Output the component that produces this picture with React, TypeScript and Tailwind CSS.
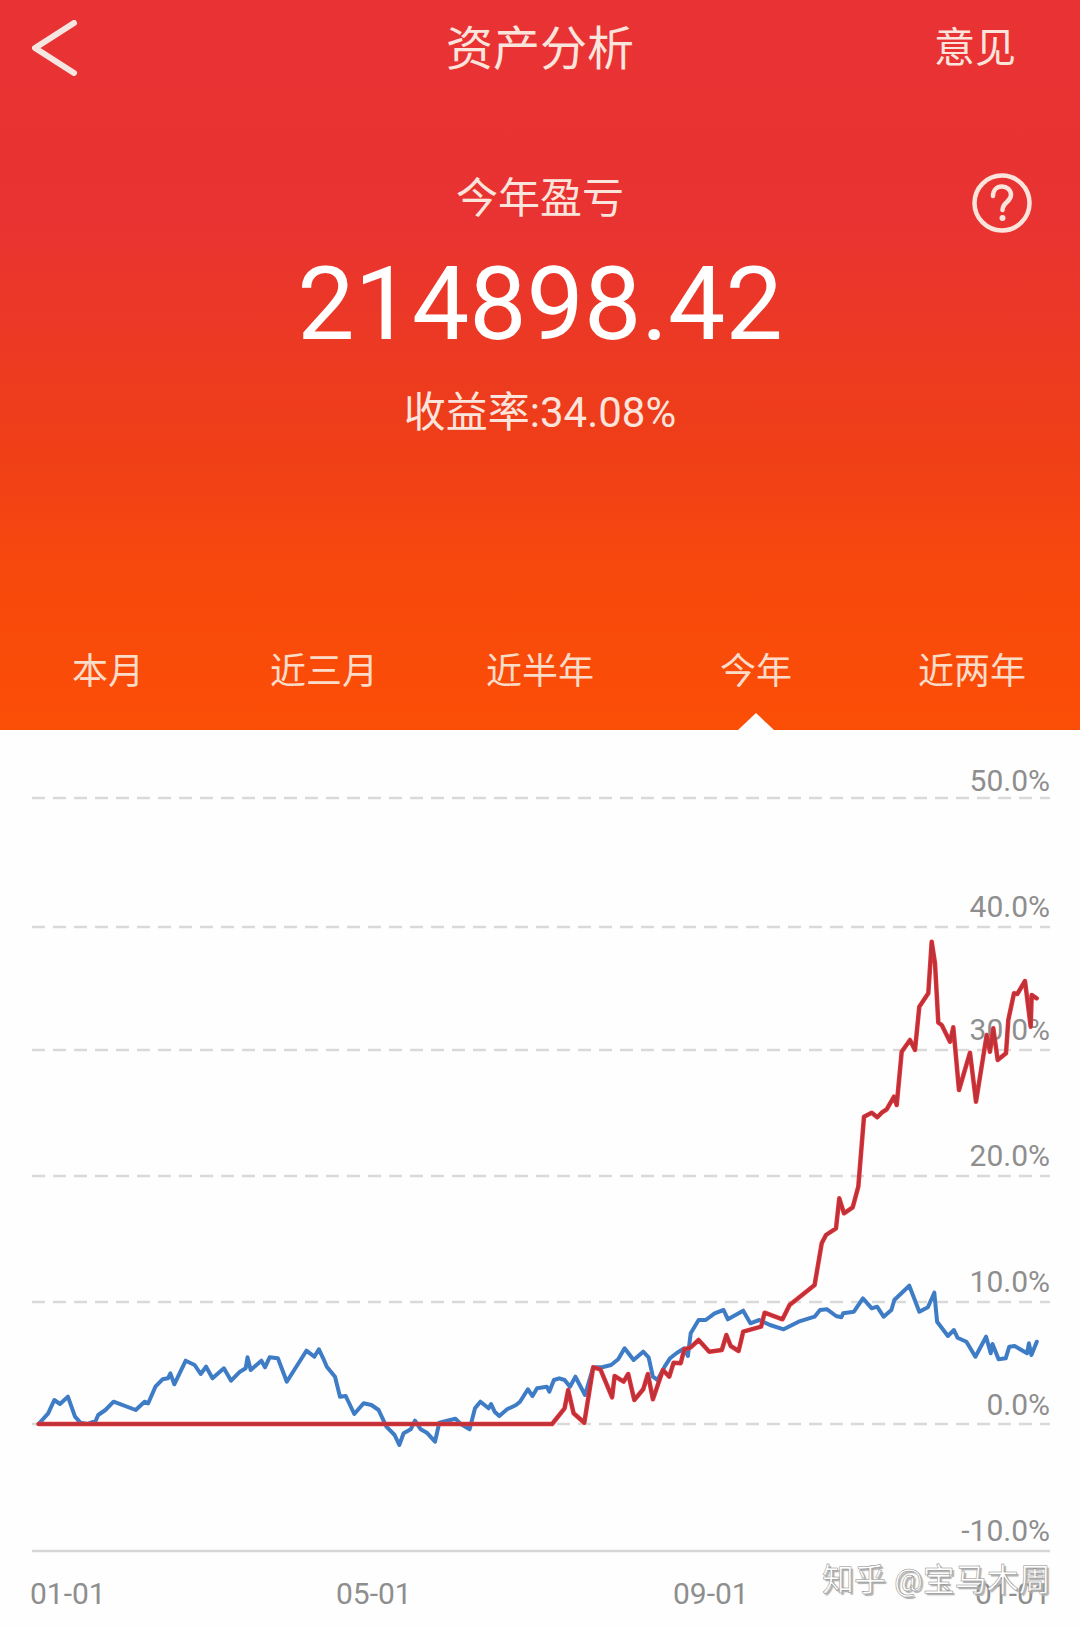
import { Fragment } from 'react';

const tabs = ['本月', '近三月', '近半年', '今年', '近两年'];

const grid = [
  { y: 798, label: '50.0%', ty: 791 },
  { y: 927, label: '40.0%', ty: 917 },
  { y: 1050, label: '30.0%', ty: 1040 },
  { y: 1176, label: '20.0%', ty: 1166 },
  { y: 1302, label: '10.0%', ty: 1292 },
  { y: 1424, label: '0.0%', ty: 1415 },
];

const xLabels = [
  { x: 30, label: '01-01' },
  { x: 336, label: '05-01' },
  { x: 673, label: '09-01' },
  { x: 975, label: '01-01' },
];

// traced off the reference crops, each run in its own crop's coordinates
const left = (pts: number[]) => conv(pts, 2.8, 0, 1270);
const right = (pts: number[]) => conv(pts, 2.8, 520, 1270);
const top = (pts: number[]) => conv(pts, 3, 720, 900);

function conv(pts: number[], scaleX: number, ox: number, oy: number) {
  const out: string[] = [];
  for (let i = 0; i < pts.length; i += 2) {
    out.push(`${(pts[i] / scaleX + ox).toFixed(1)},${(pts[i + 1] / 3 + oy).toFixed(1)}`);
  }
  return out.join(' ');
}

const bluePoints = [
  left([
    108, 462, 135, 430, 152, 390, 168, 402, 190, 380, 210, 440, 225, 458, 245, 462, 268, 452, 275, 435, 295, 420,
    318, 395, 380, 420, 405, 395, 415, 400, 435, 350, 455, 328, 470, 325, 477, 310, 488, 343, 520, 272, 545, 285,
    562, 312, 577, 290, 595, 325, 627, 295, 647, 332, 672, 305, 688, 295, 693, 262, 702, 300, 732, 272, 742, 292,
    755, 262, 778, 265, 803, 335, 858, 242, 880, 260, 893, 238, 905, 265, 915, 290, 938, 320, 952, 380, 968, 378,
    992, 432, 1018, 400, 1040, 405, 1060, 420, 1082, 470, 1105, 495, 1118, 525, 1130, 490, 1150, 478, 1162, 452,
    1178, 478, 1195, 488, 1218, 515, 1230, 458, 1275, 446, 1290, 462, 1315, 478, 1330, 415, 1345, 395, 1368, 415,
    1375, 402, 1385, 425, 1398, 438, 1420, 418, 1435, 410, 1445, 405, 1456, 395,
  ]),
  right([
    22, 358, 35, 378, 48, 355, 75, 350, 82, 365, 95, 330, 110, 325, 125, 330, 140, 350, 155, 320, 182, 375, 205, 292,
    230, 292, 255, 285, 275, 268, 293, 235, 318, 270, 345, 245, 360, 262, 372, 320, 385, 330, 405, 290, 420, 265,
    440, 248, 460, 235, 470, 258, 478, 190, 500, 150, 520, 150, 545, 130, 570, 120, 582, 148, 625, 122, 645, 160,
    670, 150, 700, 165, 738, 178, 780, 155, 825, 140, 840, 120, 860, 118, 885, 138, 900, 142, 905, 130, 935, 125,
    960, 85, 985, 115, 1000, 110, 1018, 140, 1040, 120, 1048, 90, 1090, 47, 1118, 125, 1142, 112, 1160, 68, 1168, 155,
    1198, 198, 1215, 180, 1225, 203, 1250, 215, 1275, 260, 1305, 200, 1318, 250, 1323, 222, 1340, 268, 1360, 265,
    1370, 230, 1385, 228, 1420, 250, 1425, 220, 1432, 255, 1447, 215,
  ]),
].join(' ');

const redPoints = [
  left([108, 462]),
  right([
    90, 462, 125, 415, 135, 360, 150, 430, 180, 458, 205, 292, 225, 298, 258, 382, 265, 318, 290, 335, 303, 312,
    320, 390, 345, 358, 358, 312, 372, 388, 400, 300, 418, 320, 430, 278, 450, 280, 460, 238, 478, 232, 500, 210,
    530, 245, 565, 240, 578, 195, 590, 228, 612, 243, 625, 185, 675, 170, 685, 128, 735, 148, 755, 105, 825, 45,
  ]),
  top([
    305, 1030, 318, 1005, 348, 985, 358, 895, 372, 940, 398, 922, 415, 860, 432, 650, 455, 638, 472, 652, 485, 638,
    500, 628, 522, 590, 530, 615, 545, 455, 570, 420, 585, 450, 598, 320, 625, 280, 635, 125, 645, 190, 655, 368,
    665, 375, 690, 425, 700, 382, 717, 570, 750, 458, 768, 605, 800, 405, 810, 455, 820, 385, 833, 480, 858, 460,
    865, 360, 882, 280, 892, 282, 915, 243, 932, 380, 935, 285, 950, 295,
  ]),
].join(' ');

export default function App() {
  return (
    <div
      className="relative w-[1080px] h-[1627px] overflow-hidden bg-[#fefefe] text-white"
      style={{ fontFamily: 'Roboto, "Noto Sans CJK SC", sans-serif' }}
    >
      {/* Red header */}
      <div className="relative h-[730px] flex flex-col bg-[linear-gradient(180deg,#e83234_0%,#e93332_30%,#ee3d1a_58%,#f8490c_80%,#fb4e06_100%)]">
        <div className="flex items-center justify-between h-[96px] pl-[30px] pr-[64px]">
          <svg width="48" height="56" viewBox="0 0 48 56" fill="none">
            <path d="M44 3 L5 28 L44 53" stroke="#f6e6e2" strokeWidth="6" strokeLinecap="round" strokeLinejoin="round" />
          </svg>
          <span className="absolute left-0 right-0 text-center text-[47px] leading-none text-[#fbe4dc]">资产分析</span>
          <span className="text-[41px] leading-none text-[#fbe4dc]">意见</span>
        </div>

        <div className="relative flex flex-col items-center pt-[80px]">
          <span className="text-[42px] leading-[46px] text-[#fbe4dc]">今年盈亏</span>
          <svg className="absolute left-[972px] top-[77px]" width="60" height="60" viewBox="0 0 60 60" fill="none">
            <circle cx="30" cy="30" r="27.5" stroke="#fbe4dc" strokeWidth="4.5" />
            <path d="M21 23c0-6 4-9.500 9-9.500s9 3.500 9 8.500c0 7-8.500 7-8.500 15" stroke="#fbe4dc" strokeWidth="4.5" strokeLinecap="round" />
            <circle cx="30.500" cy="45" r="3" fill="#fbe4dc" />
          </svg>
          <span className="mt-[23px] text-[102px] leading-[118px] text-white">214898.42</span>
          <span className="mt-[25px] text-[42px] leading-[50px] text-[#fbe4dc]">收益率:34.08%</span>
        </div>

        <div className="mt-auto grid grid-cols-5 pb-[38px]">
          {tabs.map((t) => (
            <span key={t} className="text-center text-[36px] leading-[40px] text-[#fbdcc8]">
              {t}
            </span>
          ))}
        </div>

        {/* pointer under the selected tab */}
        <div className="absolute left-[738px] bottom-0 w-0 h-0 border-x-[18px] border-x-transparent border-b-[17px] border-b-[#fefefe]" />
      </div>

      {/* Chart, drawn in page coordinates */}
      <svg className="block" width="1080" height="897" viewBox="0 730 1080 897" fill="none">
        {grid.map((g) => (
          <Fragment key={g.label}>
            <line x1="32" x2="1050" y1={g.y} y2={g.y} stroke="#d9d9d9" strokeWidth="2.500" strokeDasharray="13 8" />
            <text x="1050" y={g.ty} textAnchor="end" fontSize="30" fill="#8e8e8e">
              {g.label}
            </text>
          </Fragment>
        ))}
        <text x="1050" y="1541" textAnchor="end" fontSize="30" fill="#8e8e8e">
          -10.0%
        </text>
        <line x1="32" x2="1050" y1="1551" y2="1551" stroke="#d6d6d6" strokeWidth="2.500" />
        {xLabels.map((l) => (
          <text key={l.x} x={l.x} y="1604" fontSize="30" fill="#8e8e8e">
            {l.label}
          </text>
        ))}
        <polyline points={bluePoints} stroke="#3f7cc6" strokeWidth="4" strokeLinejoin="round" strokeLinecap="round" />
        <polyline points={redPoints} stroke="#e8343a" strokeWidth="4.500" strokeLinejoin="round" strokeLinecap="round" />
        <polyline points={redPoints} stroke="#bd3238" strokeWidth="2.800" strokeLinejoin="round" strokeLinecap="round" />
      </svg>

      {/* Watermark over the last date */}
      <span className="absolute left-[822px] top-[1557px] text-[32px] leading-[46px] text-white [-webkit-text-stroke:0.5px_#8a8a8a] [text-shadow:2px_2px_1px_#b0b0b0]">
        知乎 @宝马木周
      </span>
    </div>
  );
}
